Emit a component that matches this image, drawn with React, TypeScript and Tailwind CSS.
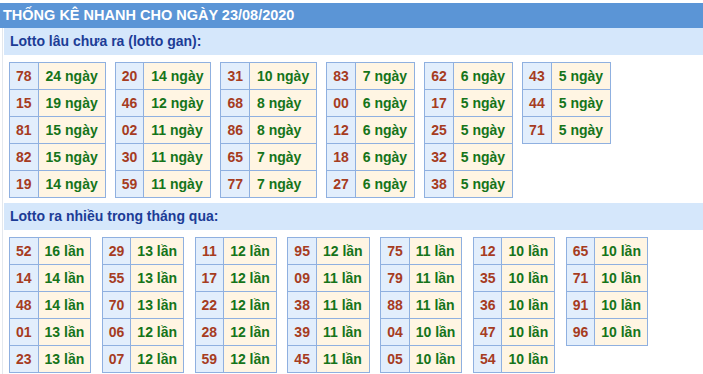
type Row = [string, string];

const ganTables: Row[][] = [
  [["78", "24"], ["15", "19"], ["81", "15"], ["82", "15"], ["19", "14"]],
  [["20", "14"], ["46", "12"], ["02", "11"], ["30", "11"], ["59", "11"]],
  [["31", "10"], ["68", "8"], ["86", "8"], ["65", "7"], ["77", "7"]],
  [["83", "7"], ["00", "6"], ["12", "6"], ["18", "6"], ["27", "6"]],
  [["62", "6"], ["17", "5"], ["25", "5"], ["32", "5"], ["38", "5"]],
  [["43", "5"], ["44", "5"], ["71", "5"]],
];

const nhieuTables: Row[][] = [
  [["52", "16"], ["14", "14"], ["48", "14"], ["01", "13"], ["23", "13"]],
  [["29", "13"], ["55", "13"], ["70", "13"], ["06", "12"], ["07", "12"]],
  [["11", "12"], ["17", "12"], ["22", "12"], ["28", "12"], ["59", "12"]],
  [["95", "12"], ["09", "11"], ["38", "11"], ["39", "11"], ["45", "11"]],
  [["75", "11"], ["79", "11"], ["88", "11"], ["04", "10"], ["05", "10"]],
  [["12", "10"], ["35", "10"], ["36", "10"], ["47", "10"], ["54", "10"]],
  [["65", "10"], ["71", "10"], ["91", "10"], ["96", "10"]],
];

function LotoTable({ rows, unit, textPad }: { rows: Row[]; unit: string; textPad: string }) {
  return (
    <div className="grid grid-cols-[auto_auto] self-start border-t border-l border-[#8fb0e0]">
      {rows.map(([num, count]) => (
        <div key={num} className="contents">
          <div className="h-[27px] border-r border-b border-[#8fb0e0] bg-[#e2eefc] px-[6px] text-center leading-[26px] text-[#a63c1f]">
            {num}
          </div>
          <div className={`h-[27px] border-r border-b border-[#8fb0e0] bg-[#fff5e3] leading-[26px] text-[#15741a] ${textPad}`}>
            {count} {unit}
          </div>
        </div>
      ))}
    </div>
  );
}

function Section({
  title,
  tables,
  unit,
  gap,
  textPad,
}: {
  title: string;
  tables: Row[][];
  unit: string;
  gap: string;
  textPad: string;
}) {
  return (
    <div>
      <div className="h-[27px] bg-[#d5e7fb] px-[6px] leading-[27px] text-[#1c3c96]">{title}</div>
      <div className={`flex pl-[5px] pt-[7px] ${gap}`}>
        {tables.map((rows, i) => (
          <LotoTable key={i} rows={rows} unit={unit} textPad={textPad} />
        ))}
      </div>
    </div>
  );
}

export default function App() {
  return (
    <div className="h-[374px] w-[703px] overflow-hidden bg-white pt-[3px] font-['Liberation_Sans',Arial,sans-serif] text-[14px] font-bold">
      <div className="h-[25px] bg-[#5b95d6] pl-[3px] text-[14.5px] leading-[25px] text-white">
        THỐNG KÊ NHANH CHO NGÀY 23/08/2020
      </div>
      <div className="ml-[2px] h-full border-l border-[#e3e8ee] pl-[1px]">
        <Section
          title="Lotto lâu chưa ra (lotto gan):"
          tables={ganTables}
          unit="ngày"
          gap="gap-x-[9px]"
          textPad="px-[7px]"
        />
        <div className="h-[5px]" />
        <Section
          title="Lotto ra nhiều trong tháng qua:"
          tables={nhieuTables}
          unit="lần"
          gap="gap-x-[10.5px]"
          textPad="px-[6px]"
        />
      </div>
    </div>
  );
}
